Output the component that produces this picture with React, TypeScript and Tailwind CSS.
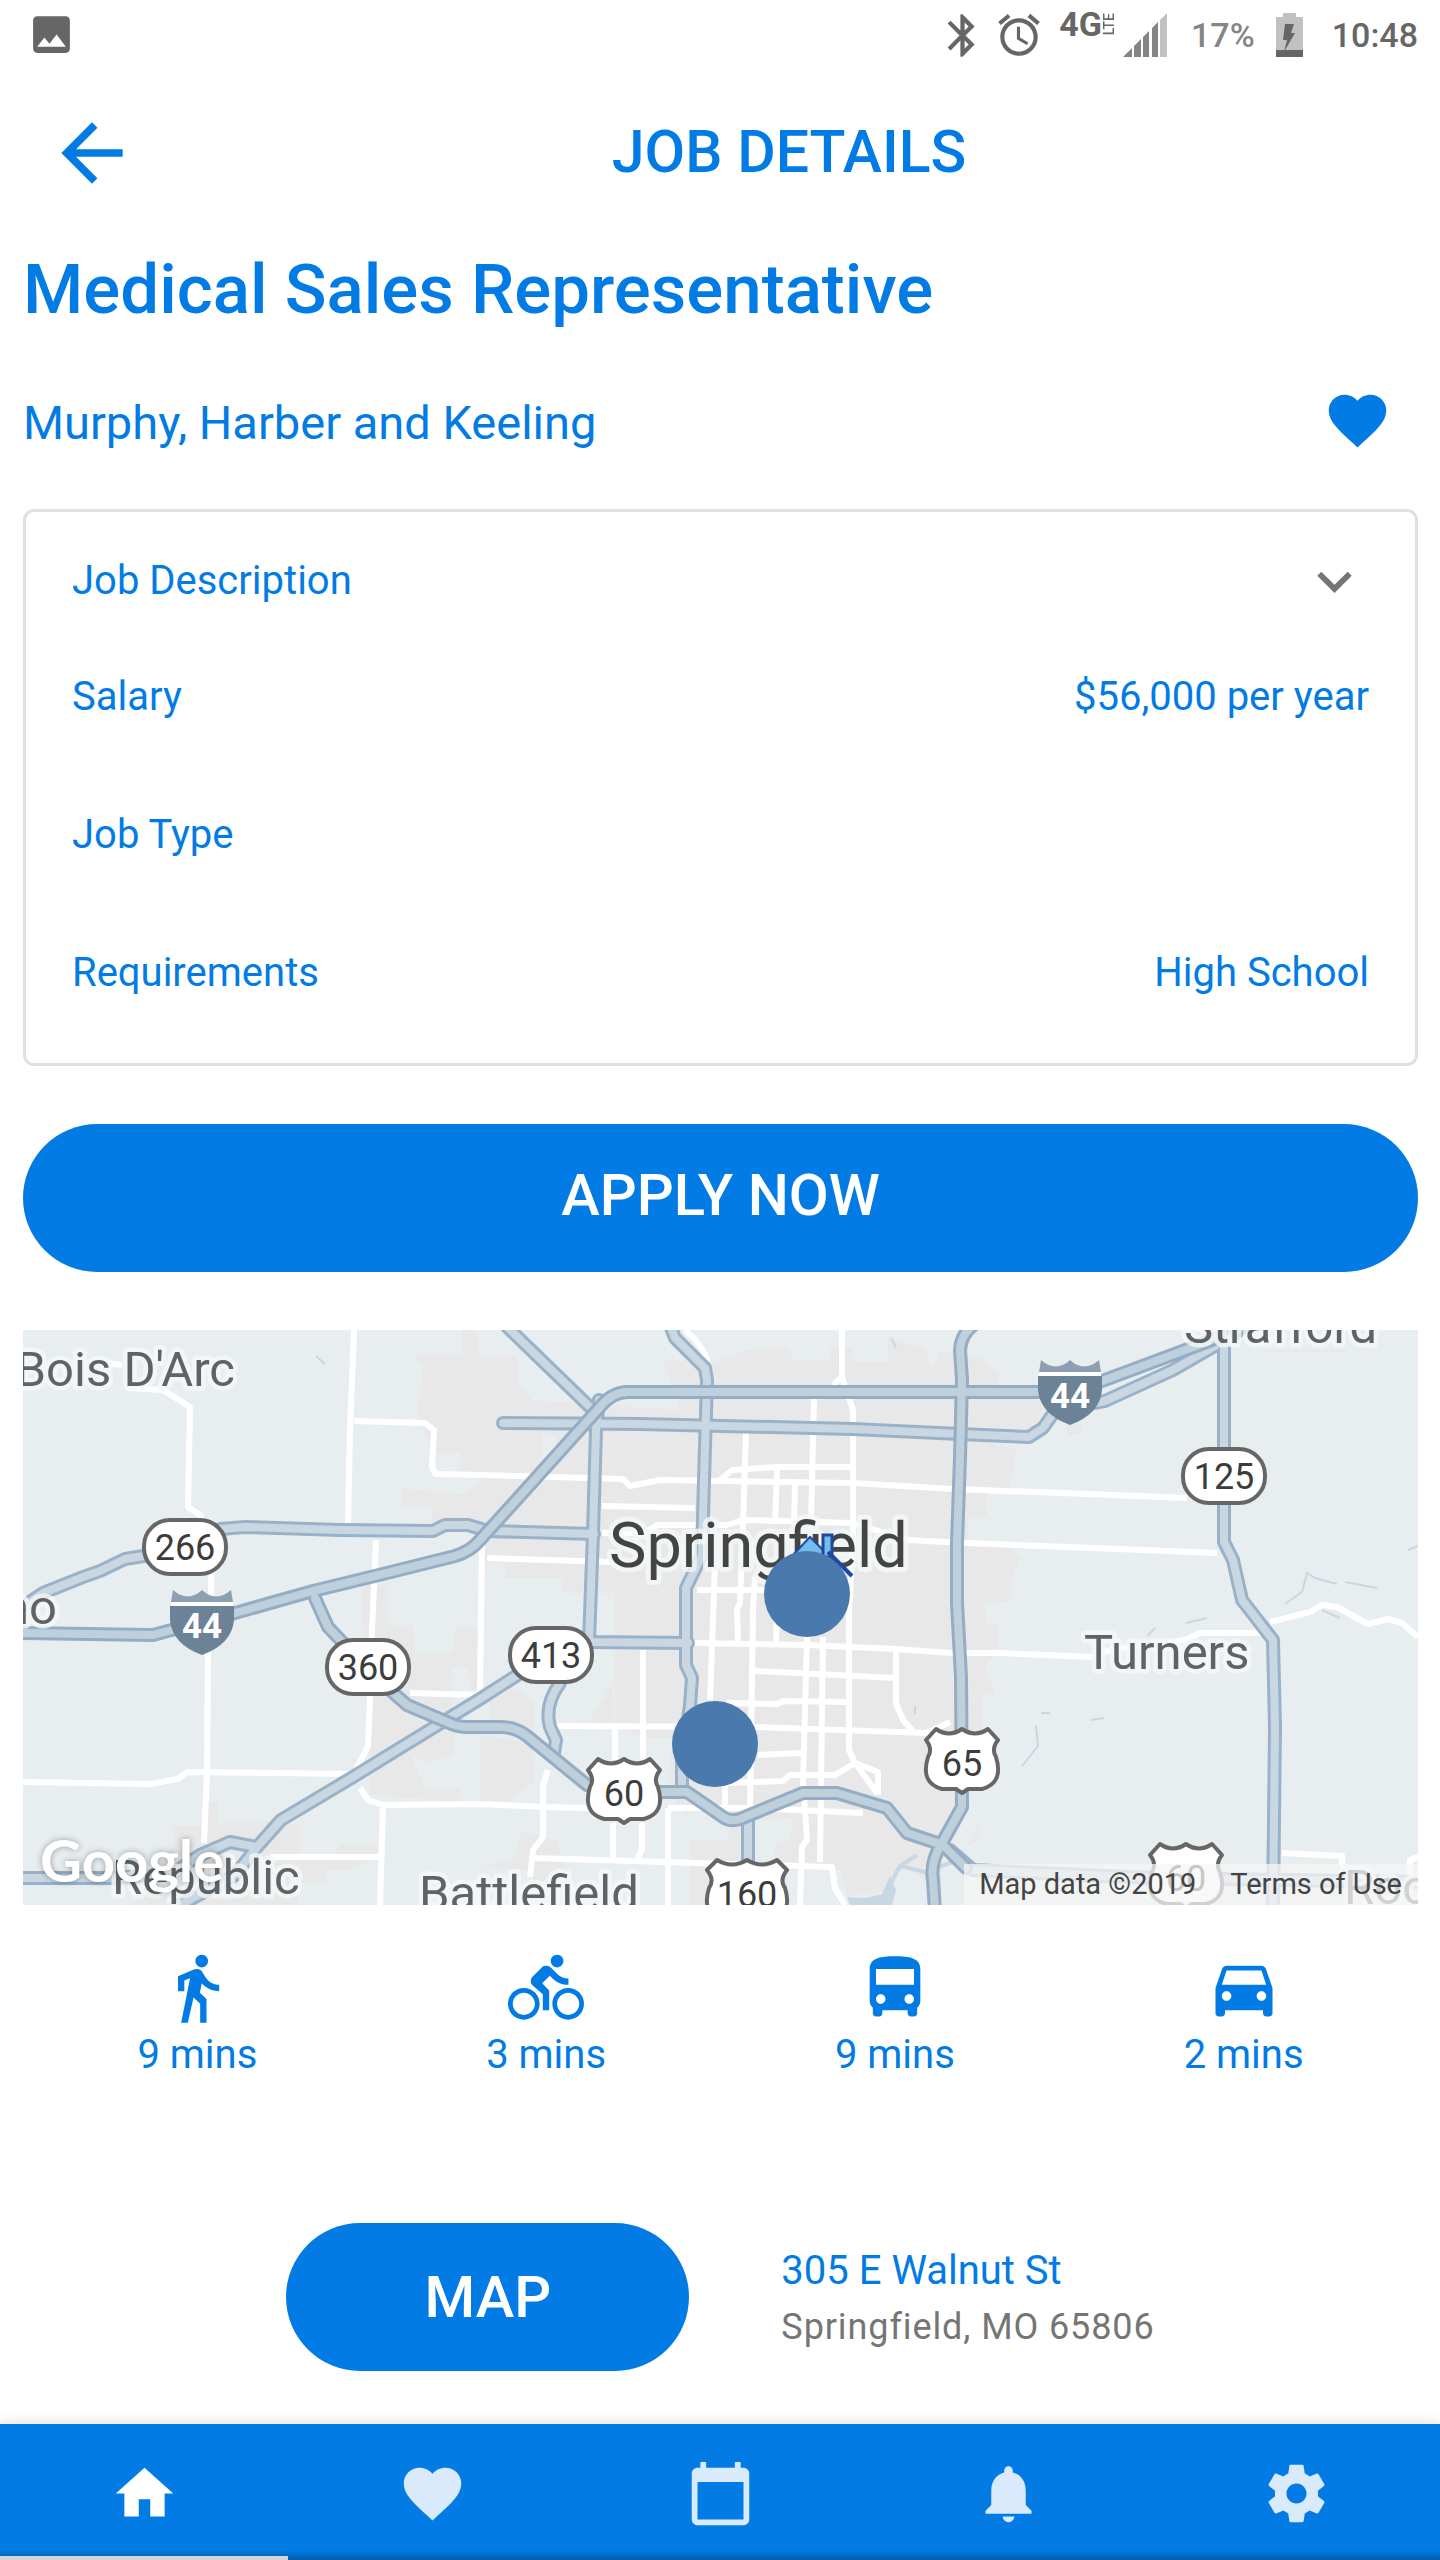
import type { ReactNode } from "react";
import {
  MdAlarm,
  MdArrowBack,
  MdBluetooth,
  MdCalendarToday,
  MdDirectionsBike,
  MdDirectionsBus,
  MdDirectionsCar,
  MdDirectionsWalk,
  MdExpandMore,
  MdFavorite,
  MdHome,
  MdImage,
  MdNotifications,
} from "react-icons/md";

function StatusBar() {
  return (
    <div className="flex h-[70px] items-start justify-between pt-[10px] pr-[22px] pl-[27px] text-[#666666]">
      <MdImage className="size-[49px]" />
      <div className="flex items-start">
        <MdBluetooth className="size-[51px]" />
        <MdAlarm className="ml-[6px] size-[50px]" />
        <div className="ml-[15px] flex items-start pt-[1px]">
          <span className="text-[34px] leading-[26px] font-bold">4G</span>
          <span className="mt-[2px] ml-px rotate-180 text-[14px] leading-[12px] font-medium [writing-mode:vertical-rl]">LTE</span>
        </div>
        <svg viewBox="0 0 44 44" className="mt-[3px] ml-[8px] size-[44px]" aria-label="Signal">
          <g fill="#858585">
            <path d="M0 44 9 35V44z" />
            <path d="M11 33 18 26V44H11z" />
            <path d="M20 24 26 18V44H20z" />
            <path d="M29 15 35 9V44H29z" />
          </g>
          <path d="M37 7 44 0V44H37z" fill="#c1c1c1" />
        </svg>
        <span className="ml-[24px] text-[34px] leading-[51px] font-medium text-[#858585]">17%</span>
        <svg viewBox="0 0 27 44" className="mt-[3px] ml-[21px] h-[44px] w-[27px]" aria-label="Battery">
          <path d="M7 0H20V4H27V44H0V4H7z" fill="#c1c1c1" />
          <path d="M0 37H27V44H0zM9 11H18L15 20H19L8 39 11 27H7z" fill="#666666" />
        </svg>
        <span className="ml-[29px] text-[34px] leading-[51px] font-medium">10:48</span>
      </div>
    </div>
  );
}

const urban = [
  "M462 1330H476L480 1357 517 1355V1380L532 1400 677 1410V1398L672 1385 662 1360 713 1363 747 1350 787 1347 795 1360H830V1348L853 1347 852 1362H888L887 1337 925 1348 932 1372 940 1350 953 1353 977 1357 998 1372V1385L1037 1398 1043 1410 1030 1432 990 1443 1017 1450 1010 1487 987 1493V1517H968V1545L1012 1548 1020 1558 1012 1577V1602L985 1603V1623L998 1625V1652L985 1667 996 1695H983V1730L966 1807 942 1850 965 1850 978 1824 980 1840 942 1860V1890L900 1866 890 1890 847 1897 840 1870H787V1905H690V1817L680 1810 668 1780 672 1738H647L615 1727V1593H563V1578H505V1563H482V1523H432V1507H402V1488L462 1494 484 1480 460 1472V1453H434L418 1417 422 1365 412 1355H462z",
  "M360 1585H388V1625H413V1653H453L455 1627H480V1690H470L467 1668H453L452 1700 457 1727 452 1757 425 1763 410 1753 425 1788H460V1802L370 1795V1700z",
  "M480 1735 533 1743V1783L508 1800 480 1804z",
  "M508 1684 533 1700V1730H490V1700z",
  "M613 1683 590 1718 600 1727H613z",
  "M520 1832 557 1840 567 1870 540 1900 530 1870 480 1868 516 1857z",
  "M173 1826H208V1802H218V1824L245 1820 300 1825V1855H335L340 1845H377V1857L353 1870H327V1883H298V1905H133L173 1845z",
  "M1067 1425H1082V1433L1067 1436z",
  "M1265 1350H1345V1352H1265z",
];

const parks = [
  "M753 1820 792 1818 790 1840 775 1842V1860H753z",
  "M688 1805 730 1825 728 1840H690z",
  "M542 1435H556V1452L542 1465z",
  "M812 1872H840L845 1905H805z",
];

const minorRoads = [
  "M100 1362 122 1365M127 1388 163 1390 190 1407 188 1507 200 1515 212 1545 211 1593 208 1653 207 1773 204 1843",
  "M354 1330 350 1430 348 1523M376 1540 372 1630 370 1700 368 1746 355 1772M360 1788 368 1800 383 1805 480 1804 543 1807 590 1808M383 1805 380 1905M270 1857H382",
  "M354 1421 425 1423 434 1430 432 1468 436 1474 480 1475 623 1479 630 1486 660 1480 780 1482 853 1483 953 1489 1113 1495 1187 1498",
  "M23 1782 150 1784 178 1779 187 1772 353 1774M410 1693 480 1695M482 1543 480 1693",
  "M487 1558 613 1562M602 1506 695 1508M602 1533H645L657 1525H727L743 1520 853 1523 907 1540 967 1543 1093 1548 1217 1553",
  "M697 1590H773M746 1433 743 1523 740 1603 737 1610 738 1642M777 1470 775 1523M795 1483 794 1523M814 1398 811 1523",
  "M842 1330V1377L853 1410V1543L849 1610V1750L855 1763 877 1793M855 1763 878 1772V1795M842 1377 833 1385",
  "M720 1480 732 1470 777 1467H852M715 1563 710 1700M725 1785V1807M755 1577 753 1610 750 1810M777 1617 776 1642",
  "M693 1643 807 1645 895 1649 952 1653 1000 1653 1093 1657 1110 1650 1185 1640 1200 1633H1260M755 1671 895 1678",
  "M727 1703 777 1704 783 1701 847 1702M557 1726 758 1727 927 1733 950 1722M758 1755 802 1753M727 1783 783 1781 790 1775H835L855 1763",
  "M896 1650V1703L903 1720 913 1731M807 1637 803 1783 805 1810 807 1840 802 1847 800 1905M823 1637 820 1862M643 1650V1760M615 1727V1760M613 1823V1858M642 1823V1850L637 1858M668 1808V1905",
  "M548 1770 543 1785V1837L533 1850 530 1877M533 1858 832 1867 835 1888 845 1905M668 1808H753L863 1813",
  "M1270 1622 1310 1612 1322 1605 1337 1607 1368 1624 1388 1619 1402 1623 1418 1637M1282 1853 1342 1856V1875M1410 1875V1860L1418 1857",
  "M685 1330Q703 1345 708 1362",
];

const stateRoads = [
  "M15 1612 43 1593 83 1577 100 1571 125 1559 150 1555M220 1529 245 1527 340 1530 433 1531 445 1525H468L488 1531 594 1534",
  "M500 1320 596 1413",
  "M503 1423 640 1424 853 1429 960 1434 1029 1437 1043 1428 1057 1408M1095 1403 1105 1401 1173 1370 1213 1347 1240 1330",
  "M599 1400 596 1430 593 1533 589 1642 688 1643",
  "M668 1320 675 1338 705 1368 707 1380 704 1480 702 1555 686 1588V1665L692 1678 690 1705 682 1760V1792",
  "M530 1667 480 1699 353 1777 281 1820 257 1847 230 1842 200 1855 175 1872 120 1878H15M257 1847 235 1875 175 1908",
  "M560 1683Q544 1705 550 1727L556 1740 554 1753M748 1817V1870",
  "M1224 1340V1542L1233 1560 1242 1600 1273 1640 1275 1727 1273 1910M950 1850 973 1870 1153 1878 1425 1882",
];

const highways = [
  "M315 1598 328 1627 350 1650M390 1690 407 1705 447 1722Q457 1727 467 1727H500Q515 1727 527 1736L587 1785M655 1792H687L723 1817Q730 1822 740 1819L803 1793H837L887 1808 907 1833 943 1845 966 1868",
  "M978 1322Q961 1332 960 1350L962 1380 960 1457 957 1543V1603L961 1677 962 1807 942 1843Q930 1862 933 1880L935 1910",
  "M15 1633 153 1635 235 1613 313 1591 387 1573 455 1556Q471 1551 480 1540L510 1507 600 1407Q612 1392 628 1392H1040L1070 1393 1220 1337 1280 1310",
];

function RoadSet({ paths, width, casing, fill }: { paths: string[]; width: number; casing: string; fill: string }) {
  return (
    <g fill="none" strokeLinejoin="round">
      {paths.map((d) => (
        <path key={d} d={d} stroke={casing} strokeWidth={width} strokeLinecap="round" />
      ))}
      {paths.map((d) => (
        <path key={d} d={d} stroke={fill} strokeWidth={width - 6} strokeLinecap="round" />
      ))}
    </g>
  );
}

function StateShield({ x, y, label }: { x: number; y: number; label: string }) {
  return (
    <g transform={`translate(${x} ${y})`}>
      <rect x="-41" y="-27" width="82" height="54" rx="26" fill="#fff" stroke="#666" strokeWidth="4" />
      <text y="13" textAnchor="middle" fontSize="36" fill="#3c3c3c">
        {label}
      </text>
    </g>
  );
}

function InterstateShield({ x, y }: { x: number; y: number }) {
  return (
    <g transform={`translate(${x} ${y})`}>
      <path d="M-29 0Q-14 13 0 0 14 13 29 0L31 12H-31z" fill="#8da0b1" />
      <path d="M-31 12H31V16H-31z" fill="#fff" />
      <path d="M-32 16H32V30Q30 54 0 65-30 54-32 30z" fill="#6c8297" />
      <text y="48" textAnchor="middle" fontSize="35" fontWeight="700" fill="#fff">
        44
      </text>
    </g>
  );
}

function RouteShield({ x, y, label }: { x: number; y: number; label: string }) {
  const wide = label.length > 2;
  return (
    <g transform={`translate(${x} ${y})`}>
      <path
        d={
          wide
            ? "M0 2Q-15 11-30 2L-40 12Q-32 22-38 30-46 56-24 62H-6L0 66 6 62H24Q46 56 38 30 32 22 40 12L30 2Q15 11 0 2z"
            : "M0 2Q-13 11-26 2L-36 13Q-29 22-34 30-42 56-20 62H-6L0 66 6 62H20Q42 56 34 30 29 22 36 13L26 2Q13 11 0 2z"
        }
        fill="#fff"
        stroke="#666"
        strokeWidth="4"
        strokeLinejoin="round"
      />
      <text y="49" textAnchor="middle" fontSize="36" fill="#3c3c3c">
        {label}
      </text>
    </g>
  );
}

function TownLabel({ x, y, anchor = "start", children }: { x: number; y: number; anchor?: "start" | "end"; children: string }) {
  return (
    <text x={x} y={y} textAnchor={anchor} fontSize="49" fill="#5f6368" stroke="#f4f7f8" strokeOpacity="0.8" strokeWidth="9" strokeLinejoin="round" paintOrder="stroke">
      {children}
    </text>
  );
}

function CommuteMap() {
  return (
    <div className="relative mt-[58px] overflow-hidden">
      <svg viewBox="23 1330 1395 575" className="block w-full" role="img" aria-label="Map of Springfield">
        <path d="M23 1330H1418V1905H23z" fill="#e8eef0" />
        <g fill="#e8e8e8">
          {urban.map((d) => (
            <path key={d} d={d} />
          ))}
        </g>
        <g fill="#e8eef0">
          {parks.map((d) => (
            <path key={d} d={d} />
          ))}
        </g>
        <g fill="none" stroke="#c8d8e3" strokeWidth="2">
          <path d="M316 1356 325 1364M1285 1604 1302 1592 1307 1573 1315 1578 1337 1584M1345 1582 1377 1588M1322 1610 1340 1618M1408 1550 1418 1546M1186 1623 1207 1618M1147 1636 1155 1628M1036 1725 1038 1746 1022 1766M1041 1713H1050M1091 1720 1104 1718M891 1338 896 1348M915 1706V1714" />
          <path d="M917 1855 900 1866 890 1885M900 1866 925 1872 958 1860" strokeWidth="4" />
        </g>
        <path d="M847 1897 865 1898 882 1894 890 1876 896 1890 892 1905H850z" fill="#c8d8e3" />
        <g fill="none" stroke="#fff" strokeWidth="6" strokeLinejoin="round">
          {minorRoads.map((d) => (
            <path key={d} d={d} />
          ))}
        </g>
        <RoadSet paths={stateRoads} width={14} casing="#9ab2c8" fill="#c8d7e2" />
        <RoadSet paths={highways} width={14} casing="#94adc4" fill="#bfd0dd" />

        <TownLabel x={235} y={1386} anchor="end">Bois D'Arc</TownLabel>
        <TownLabel x={57} y={1624} anchor="end">no</TownLabel>
        <TownLabel x={1184} y={1343}>Strafford</TownLabel>
        <TownLabel x={1084} y={1669}>Turners</TownLabel>
        <TownLabel x={112} y={1894}>Republic</TownLabel>
        <TownLabel x={419} y={1910}>Battlefield</TownLabel>
        <TownLabel x={1344} y={1904}>Rock</TownLabel>
        <text x="609" y="1567" fontSize="63" fill="#444" stroke="#f4f7f8" strokeOpacity="0.8" strokeWidth="10" strokeLinejoin="round" paintOrder="stroke">
          Springfield
        </text>

        <StateShield x={185} y={1547} label="266" />
        <StateShield x={1224} y={1476} label="125" />
        <StateShield x={368} y={1667} label="360" />
        <StateShield x={551} y={1655} label="413" />
        <InterstateShield x={202} y={1590} />
        <InterstateShield x={1070} y={1360} />
        <RouteShield x={624} y={1757} label="60" />
        <RouteShield x={962} y={1727} label="65" />
        <RouteShield x={1186} y={1842} label="60" />
        <RouteShield x={747} y={1858} label="160" />

        <path d="M793 1555 810 1537 828 1555z" fill="#72bde9" stroke="#2148a0" strokeWidth="2" />
        <path d="M823 1535H832V1557H823z" fill="#72bde9" stroke="#2148a0" strokeWidth="3" />
        <path d="M828 1552 852 1576" stroke="#2148a0" strokeWidth="4" />
        <circle cx="807" cy="1594" r="43" fill="#4a79ae" />
        <circle cx="715" cy="1744" r="43" fill="#4a79ae" />

        <text x="40" y="1882" fontSize="58" fontWeight="700" fill="#fff" className="font-['Lato',sans-serif] drop-shadow-[0_0_3px_rgba(0,0,0,0.35)]">
          Google
        </text>
      </svg>
      <div className="absolute right-0 bottom-0 flex h-[41px] items-center gap-[34px] bg-[#f5f5f5]/75 pr-[16px] pl-[15px] text-[29px] leading-[41px] text-[#444444]">
        <span>Map data ©2019</span>
        <a href="#terms">Terms of Use</a>
      </div>
    </div>
  );
}

function Row({ label, value }: { label: string; value?: string }) {
  return (
    <div className="flex h-[138px] items-center justify-between">
      <dt>{label}</dt>
      <dd>{value}</dd>
    </div>
  );
}

function Commute({ icon, time }: { icon: ReactNode; time: string }) {
  return (
    <li className="flex flex-col items-center gap-[5px] text-[40px] leading-[48px]">
      {icon}
      {time}
    </li>
  );
}

function GearIcon() {
  return (
    <svg viewBox="0 0 24 24" fill="currentColor" className="size-[69px]">
      <path d="M19.43 12.98c.04-.32.07-.64.07-.98s-.03-.66-.07-.98l2.11-1.65c.19-.15.24-.42.12-.64l-2-3.46c-.12-.22-.39-.3-.61-.22l-2.49 1c-.52-.4-1.08-.73-1.69-.98l-.38-2.65C14.46 2.18 14.25 2 14 2h-4c-.25 0-.46.18-.49.42l-.38 2.65c-.61.25-1.17.59-1.69.98l-2.49-1c-.23-.09-.49 0-.61.22l-2 3.46c-.13.22-.07.49.12.64l2.11 1.65c-.04.32-.07.65-.07.98s.03.66.07.98l-2.11 1.65c-.19.15-.24.42-.12.64l2 3.46c.12.22.39.3.61.22l2.49-1c.52.4 1.08.73 1.69.98l.38 2.65c.03.24.24.42.49.42h4c.25 0 .46-.18.49-.42l.38-2.65c.61-.25 1.17-.59 1.69-.98l2.49 1c.23.09.49 0 .61-.22l2-3.46c.12-.22.07-.49-.12-.64l-2.11-1.65zM12 15.5c-1.93 0-3.5-1.57-3.5-3.5s1.57-3.5 3.5-3.5 3.5 1.57 3.5 3.5-1.57 3.5-3.5 3.5z" />
    </svg>
  );
}

function BottomNav() {
  const tabs = [
    { name: "Home", icon: <MdHome className="size-[69px]" /> },
    { name: "Favorites", icon: <MdFavorite className="size-[69px]" /> },
    { name: "Calendar", icon: <MdCalendarToday className="size-[69px]" /> },
    { name: "Notifications", icon: <MdNotifications className="size-[69px]" /> },
    { name: "Settings", icon: <GearIcon /> },
  ];
  return (
    <nav className="relative mt-auto grid h-[136px] grid-cols-5 bg-[#027ce4] pt-[2px] shadow-[0_0_12px_rgba(0,0,0,0.16)]">
      {tabs.map((tab, i) => (
        <button
          key={tab.name}
          type="button"
          aria-label={tab.name}
          className={i === 0 ? "flex items-center justify-center text-white" : "flex items-center justify-center text-[#d8eafb]"}
        >
          {tab.icon}
        </button>
      ))}
      <div className="pointer-events-none absolute inset-x-0 bottom-0 h-[10px] bg-linear-to-b from-transparent to-black/25" />
      <div className="absolute bottom-0 left-0 h-[4px] w-1/5 bg-[#d4d4d4]" />
    </nav>
  );
}

export default function App() {
  return (
    <div className="flex min-h-screen flex-col bg-white font-['Roboto',sans-serif] text-[#027ce4]">
      <StatusBar />
      <header className="flex h-[166px] items-center">
        <button type="button" aria-label="Back" className="ml-[46px]">
          <MdArrowBack className="size-[92px]" />
        </button>
        <h1 className="flex-1 pb-[2px] text-center text-[59px] font-medium">JOB DETAILS</h1>
      </header>
      <main className="pr-[22px] pl-[23px]">
        <h2 className="mt-[14px] text-[69px] leading-[80px] font-medium">Medical Sales Representative</h2>
        <div className="mt-[50px] flex h-[80px] items-center justify-between pr-[26px]">
          <p className="pt-[6px] text-[47px]">Murphy, Harber and Keeling</p>
          <button type="button" aria-label="Save job">
            <MdFavorite className="size-[69px]" />
          </button>
        </div>
        <section className="mt-[49px] rounded-[11px] border-[3px] border-[#e0e0e0] px-[46px] pt-[22px] pb-[21px] text-[40px]">
          <button type="button" className="flex h-[94px] w-full items-center justify-between" aria-expanded="false">
            Job Description
            <MdExpandMore className="size-[69px] text-[#757575]" />
          </button>
          <dl>
            <Row label="Salary" value="$56,000 per year" />
            <Row label="Job Type" />
            <Row label="Requirements" value="High School" />
          </dl>
        </section>
        <button type="button" className="mt-[58px] h-[148px] w-full rounded-full bg-[#027ce4] pb-[6px] text-[58px] font-medium text-white">
          APPLY NOW
        </button>
        <CommuteMap />
        <ul className="mt-[45px] grid grid-cols-4">
          <Commute icon={<MdDirectionsWalk className="size-[76px]" />} time="9 mins" />
          <Commute icon={<MdDirectionsBike className="size-[76px]" />} time="3 mins" />
          <Commute icon={<MdDirectionsBus className="size-[76px]" />} time="9 mins" />
          <Commute icon={<MdDirectionsCar className="size-[76px]" />} time="2 mins" />
        </ul>
        <div className="mt-[144px] mb-[50px] flex items-center justify-center gap-[92px]">
          <button type="button" className="h-[148px] w-[403px] rounded-full bg-[#027ce4] text-[58px] font-medium text-white">
            MAP
          </button>
          <address className="pt-[4px] not-italic">
            <p className="text-[40px] leading-[57px]">305 E Walnut St</p>
            <p className="text-[36px] leading-[57px] tracking-wide text-[#757575]">Springfield, MO 65806</p>
          </address>
        </div>
      </main>
      <BottomNav />
    </div>
  );
}
